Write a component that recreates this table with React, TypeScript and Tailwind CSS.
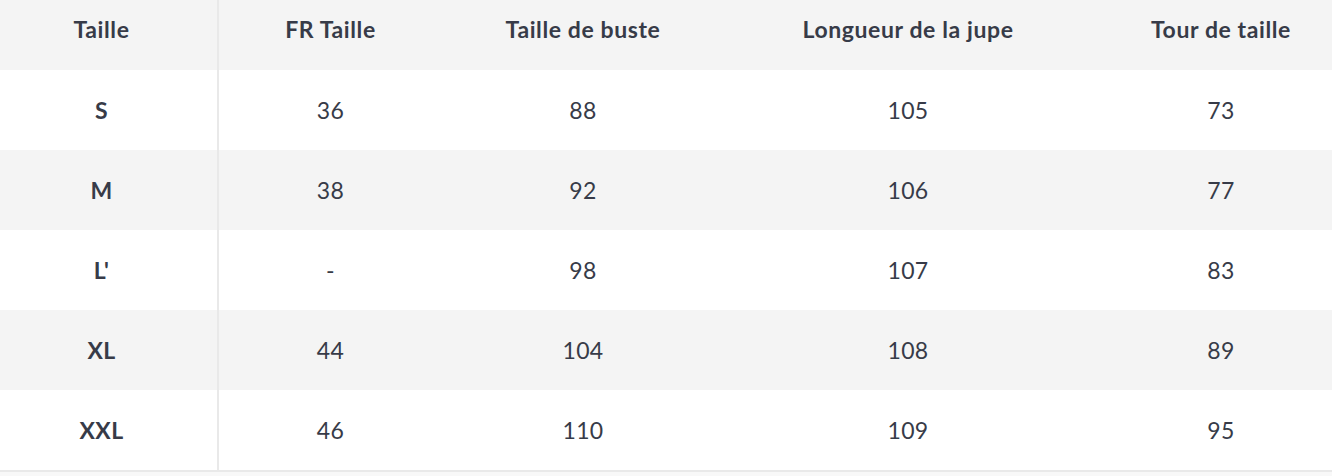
const headers = ["Taille", "FR Taille", "Taille de buste", "Longueur de la jupe", "Tour de taille"];

const rows = [
  ["S", "36", "88", "105", "73"],
  ["M", "38", "92", "106", "77"],
  ["L'", "-", "98", "107", "83"],
  ["XL", "44", "104", "108", "89"],
  ["XXL", "46", "110", "109", "95"],
];

const App = () => {
  return (
    <div className="w-[1332px] h-[476px] overflow-hidden bg-[#f8f8f8] font-['Lato',sans-serif] text-[#373b48]">
      <table className="w-[1350px] table-fixed border-collapse">
        <colgroup>
          <col className="w-[218px]" />
          <col className="w-[224px]" />
          <col className="w-[282px]" />
          <col className="w-[368px]" />
          <col className="w-[258px]" />
        </colgroup>
        <thead>
          <tr className="h-[70px] bg-[#f4f4f4]">
            {headers.map((h, i) => (
              <th
                key={h}
                className={
                  i === 0
                    ? "pb-[12px] pr-[14px] text-center text-[23px] font-bold tracking-[0.6px] border-r-2 border-[#e9e9e9]"
                    : "pb-[12px] text-center text-[23px] font-bold tracking-[0.6px]"
                }
              >
                {h}
              </th>
            ))}
          </tr>
        </thead>
        <tbody>
          {rows.map((r, ri) => (
            <tr
              key={r[0]}
              className={
                ri % 2 === 0
                  ? "h-[80px] bg-white"
                  : "h-[80px] bg-[#f4f4f4]"
              }
            >
              {r.map((c, ci) => (
                <td
                  key={ci}
                  className={
                    ci === 0
                      ? "pr-[14px] text-center text-[23px] font-bold tracking-[0.4px] border-r-2 border-[#e9e9e9]"
                      : "text-center text-[23px] tracking-[0.3px]"
                  }
                >
                  {c}
                </td>
              ))}
            </tr>
          ))}
          <tr className="h-[2px] bg-[#e9e9e9]">
            <td colSpan={5} className="p-0" />
          </tr>
        </tbody>
      </table>
    </div>
  );
};

export default App;
